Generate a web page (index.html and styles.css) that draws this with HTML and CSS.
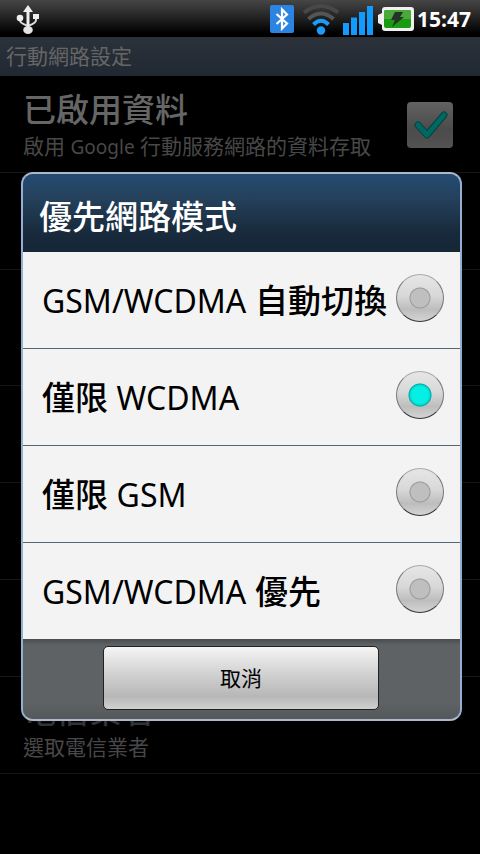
FILE: index.html
```html
<!DOCTYPE html>
<html lang="zh-Hant">
<head>
<meta charset="utf-8">
<meta name="viewport" content="width=device-width, initial-scale=1">
<title>行動網路設定</title>
<link rel="stylesheet" href="styles.css">
</head>
<body>
<header class="status">
  <svg class="usb" width="24" height="30" viewBox="0 0 24 30" aria-hidden="true">
    <path d="M12 0 7 7h3.500v17h3V7H17z" fill="#eee"/>
    <path d="M4 13v2.500q0 2.500 7 5M20 11v4q0 3-7 5.500" fill="none" stroke="#ddd" stroke-width="2"/>
    <circle cx="4" cy="13" r="3.300" fill="#eee"/>
    <path d="M17 9h6v5h-6z" fill="#eee"/>
    <ellipse cx="12" cy="25" rx="4.800" ry="4" fill="#e4e4e4"/>
  </svg>
  <div class="tray">
    <svg width="24" height="28" viewBox="0 0 24 28" aria-hidden="true">
      <rect width="24" height="28" rx="2" fill="#2b83e2"/>
      <path d="M6.500 9 17 18.500 12 23.500V4.500L17 9.500 6.500 19" fill="none" stroke="#fff" stroke-width="2.200"/>
    </svg>
    <svg class="wifi" width="38" height="32" viewBox="0 0 38 32" aria-hidden="true">
      <g fill="none" stroke-width="4">
        <path d="M2 9.500Q19-3.500 36 9.500" stroke="#484848"/>
        <path d="M6.500 16Q19 5 31.500 16" stroke="#555"/>
        <path d="M11.500 21.500Q19 14 26.500 21.500" stroke="#1a9cf8"/>
      </g>
      <circle cx="19" cy="27.500" r="4.200" fill="#1a9cf8"/>
    </svg>
    <svg class="signal" width="30" height="29" viewBox="0 0 30 29" aria-hidden="true">
      <path d="M0 17h6v12H0zM8 11.500h6V29H8zM16 6h6v23h-6zM24 0h6v29h-6z" fill="#129bff"/>
    </svg>
    <svg class="battery" width="36" height="24" viewBox="0 0 36 24" aria-hidden="true">
      <path d="M7 0h26q3 0 3 3v18q0 3-3 3H7q-3 0-3-3v-3L0 16V8l4-2V3q0-3 3-3z" fill="#f0f0f0"/>
      <rect x="6" y="3" width="27" height="18" rx="2" fill="#1a9a10"/>
      <path d="M6 5q0-2 2-2h23q2 0 2 2v7H6z" fill="#49a93b"/>
      <path d="M17 5h8l-3 5h4L14 20l3-7h-4z" fill="#24322a"/>
    </svg>
    <time>15:47</time>
  </div>
</header>
<main class="settings">
  <h1>行動網路設定</h1>
  <ul class="prefs">
    <li class="pref">
      <label class="text" for="data"><span class="name">已啟用資料</span><span class="note">啟用 <span class="latin-small">Google</span> 行動服務網路的資料存取</span></label>
      <span class="check">
        <input id="data" type="checkbox" checked>
        <svg width="46" height="46" viewBox="0 0 46 46" aria-hidden="true"><path d="M11 23 20 33 37 13" fill="none" stroke="#00433f" stroke-width="7" stroke-linecap="round" stroke-linejoin="round"/><path d="M11 23 20 33 37 13" fill="none" stroke="#006761" stroke-width="5" stroke-linecap="round" stroke-linejoin="round"/></svg>
      </span>
    </li>
    <li class="pref"></li>
    <li class="pref tall"></li>
    <li class="pref"></li>
    <li class="pref"></li>
    <li class="pref"></li>
    <li class="pref"><div class="text"><span class="name dim">電信業者</span><span class="note">選取電信業者</span></div></li>
  </ul>
  <div class="overlay">
    <form class="dialog" role="dialog" aria-labelledby="mode">
      <h2 id="mode">優先網路模式</h2>
      <label class="option"><span><span class="latin">GSM/WCDMA</span> 自動切換</span><input type="radio" name="mode"></label>
      <label class="option"><span>僅限 <span class="latin">WCDMA</span></span><input type="radio" name="mode" checked></label>
      <label class="option"><span>僅限 <span class="latin">GSM</span></span><input type="radio" name="mode"></label>
      <label class="option"><span><span class="latin">GSM/WCDMA</span> 優先</span><input type="radio" name="mode"></label>
      <div class="actions"><button type="button">取消</button></div>
    </form>
  </div>
</main>
</body>
</html>
```
FILE: styles.css
```css
* { box-sizing: border-box; }
body {
  margin: 0;
  min-height: 100vh;
  display: flex;
  flex-direction: column;
  background: #000;
  font-family: "Noto Sans", "Noto Sans CJK TC", sans-serif;
}
h1, h2, ul { margin: 0; padding: 0; font-weight: 400; }
.status {
  height: 38px;
  padding: 0 9px 0 16px;
  display: flex;
  align-items: center;
  justify-content: space-between;
  background: linear-gradient(#464646, #242424 45%, #000 90%);
  border-bottom: 1px solid #302c35;
}
.usb { margin-top: 3px; }
.tray { display: flex; align-items: center; }
.wifi { margin-left: 8px; }
.signal { margin: 3px 0 0 3px; }
.battery { margin: 0 3px 0 5px; }
time { color: #fff; font: 700 21px/28px "Open Sans", sans-serif; }
.settings { flex: 1; position: relative; }
h1 {
  height: 38px;
  padding-left: 6px;
  font-size: 21px;
  line-height: 36px;
  color: #666;
  background: linear-gradient(#2b323a, #202832);
}
.prefs { list-style: none; }
.pref {
  height: 97px;
  padding: 14px 27px 12px 23px;
  display: flex;
  align-items: center;
  justify-content: space-between;
  border-bottom: 1px solid #161616;
}
.tall { height: 116px; }
.text { display: flex; flex-direction: column; padding-top: 2px; white-space: nowrap; }
.name { font-size: 33px; font-weight: 500; line-height: 40px; color: #666; }
.dim { color: #333; }
.note { font-size: 21px; line-height: 32px; color: #484848; }
.latin { font-size: 32px; font-weight: 400; }
.latin-small { font-size: 19px; }
.check { position: relative; height: 46px; }
.check input {
  appearance: none;
  margin: 0;
  width: 46px;
  height: 46px;
  border-radius: 4px;
  background: linear-gradient(#626262, #4b4b4b 60%, #535353);
}
.check svg { position: absolute; inset: 0; pointer-events: none; }
.overlay {
  position: absolute;
  inset: 0;
  padding: 1px 18px 0 21px;
  display: flex;
  align-items: center;
}
.dialog {
  flex: 1;
  overflow: hidden;
  border: 2px solid #adb9c8;
  border-left-color: #93b0d3;
  border-right-color: #93b0d3;
  border-radius: 12px;
  background: #5e6265;
}
h2 {
  height: 78px;
  padding: 7px 16px 0;
  font-size: 33px;
  font-weight: 500;
  line-height: 72px;
  color: #fff;
  background: linear-gradient(#234b73, #25415c 30%, #182a3c 75%, #152636);
}
.option {
  height: 97px;
  padding: 0 16px 4px 19px;
  display: flex;
  align-items: center;
  justify-content: space-between;
  font-size: 33px;
  font-weight: 500;
  line-height: 40px;
  white-space: nowrap;
  color: #000;
  background: #f3f3f3;
  border-bottom: 1px solid #56656f;
}
.option:nth-last-child(2) { height: 96px; border-bottom: 0; }
.option > span { padding-top: 6px; }
.option input {
  appearance: none;
  margin: 0;
  width: 48px;
  height: 48px;
  flex: none;
  border: 1px solid #777;
  border-top-color: #aaa;
  border-bottom-color: #333;
  border-radius: 50%;
  background:
    radial-gradient(circle, #bfbfbf 9px, #999 10px, transparent 11px),
    linear-gradient(#e6e6e6, #d8d8d8 45%, #bdbdbd 75%, #d4d4d4);
}
.option input:checked {
  background:
    radial-gradient(circle, #05efe5 8px, #00dcd2 10px, #00a8a2 11px, transparent 12px),
    linear-gradient(#e6e6e6, #d8d8d8 45%, #bdbdbd 75%, #d4d4d4);
}
.actions {
  padding: 7px 81px 9px 80px;
  background: linear-gradient(#484c4f, #5e6265 6px, #5e6265 80%, #55585a);
}
.actions button {
  width: 100%;
  height: 64px;
  border: 1px solid #222;
  border-radius: 5px;
  font: 21px/28px "Noto Sans", "Noto Sans CJK TC", sans-serif;
  color: #000;
  background: linear-gradient(#f5f5f5, #d4d4d4 40%, #b7b7b7 80%, #d0d0d0);
}
```
